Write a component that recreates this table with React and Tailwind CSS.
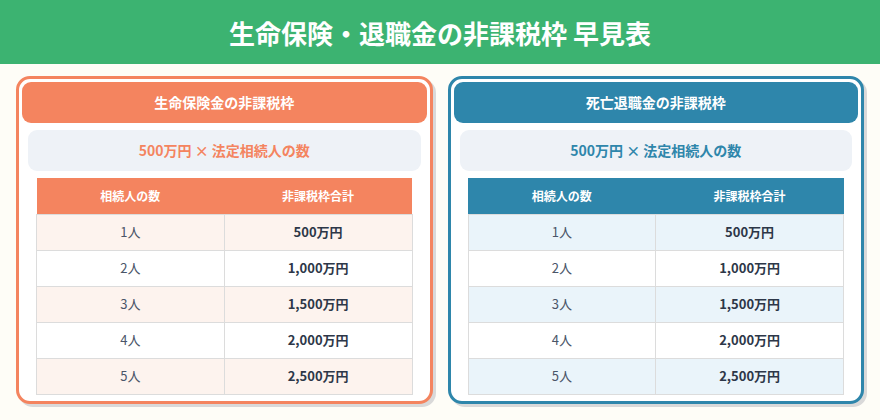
const rows = [
  ["1人", "500万円"],
  ["2人", "1,000万円"],
  ["3人", "1,500万円"],
  ["4人", "2,000万円"],
  ["5人", "2,500万円"],
];

function Card({ title, theme }) {
  const orange = theme === "orange";
  return (
    <div
      className={`flex-1 rounded-[14px] border-[3px] bg-white p-[3px] shadow-[3px_3px_0_#d9d9d9] ${
        orange ? "border-[#F4845F]" : "border-[#2E86AB]"
      }`}
    >
      <div
        className={`flex h-[41px] items-center justify-center rounded-[9px] text-[14px] font-bold text-white ${
          orange ? "bg-[#F4845F]" : "bg-[#2E86AB]"
        }`}
      >
        {title}
      </div>
      <div className="px-[6px] pb-[3px]">
        <div
          className={`mt-[7px] flex h-[41px] items-center justify-center rounded-[9px] bg-[#EEF2F7] text-[14px] font-bold ${
            orange ? "text-[#F4845F]" : "text-[#2E86AB]"
          }`}
        >
          500万円 × 法定相続人の数
        </div>
        <table className="mx-[8px] mt-[7px] w-[calc(100%-16px)] table-fixed border-collapse text-[13px]">
          <thead>
            <tr className={orange ? "bg-[#F4845F]" : "bg-[#2E86AB]"}>
              <th className="h-[36px] font-bold text-[12px] text-white">相続人の数</th>
              <th className="h-[36px] font-bold text-[12px] text-white">非課税枠合計</th>
            </tr>
          </thead>
          <tbody>
            {rows.map(([n, v], i) => (
              <tr
                key={n}
                className={
                  i % 2 === 0 ? (orange ? "bg-[#FDF3EE]" : "bg-[#EAF4FA]") : "bg-white"
                }
              >
                <td className="h-[36px] border border-[#dcdcdc] text-center text-[#4A5568]">{n}</td>
                <td className="h-[36px] border border-[#dcdcdc] text-center font-bold text-[#2D3748]">{v}</td>
              </tr>
            ))}
          </tbody>
        </table>
      </div>
    </div>
  );
}

export default function App() {
  return (
    <div
      className="h-[420px] w-[880px] overflow-hidden bg-[#FEFDF7]"
      style={{ fontFamily: '"Noto Sans CJK JP", "Noto Sans", sans-serif' }}
    >
      <div className="flex h-[64px] items-center justify-center bg-[#3CB371] text-[26px] font-bold text-white">
        生命保険・退職金の非課税枠 早見表
      </div>
      <div className="flex gap-[15px] px-[16px] pt-[12px]">
        <Card title="生命保険金の非課税枠" theme="orange" />
        <Card title="死亡退職金の非課税枠" theme="blue" />
      </div>
    </div>
  );
}
